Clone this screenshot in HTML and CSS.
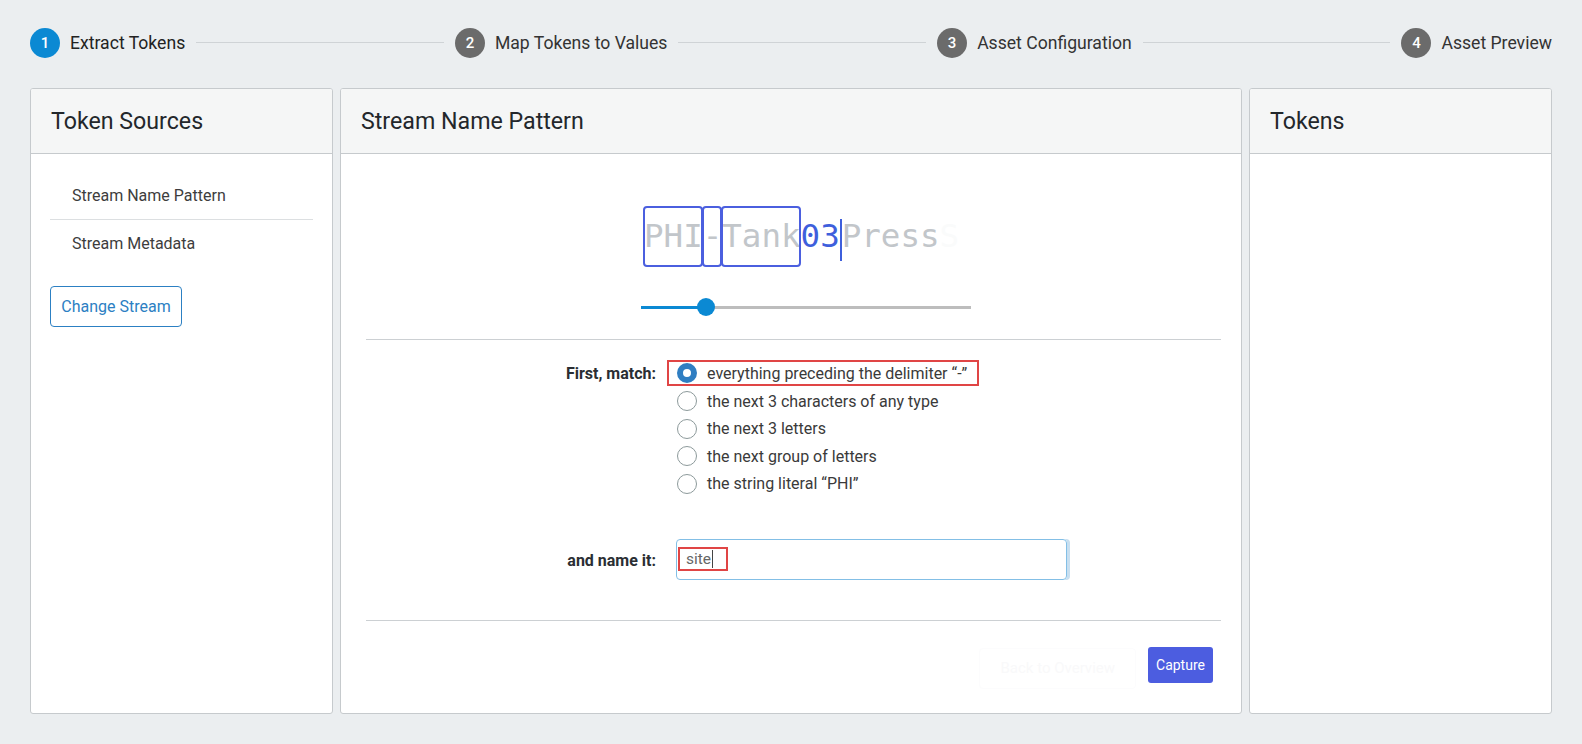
FILE: index.html
```html
<!DOCTYPE html>
<html>
<head>
<meta charset="utf-8">
<link rel="stylesheet" href="styles.css">
</head>
<body>
<div class="page">
  <div class="stepper">
    <div class="step active"><span class="num">1</span><span class="label">Extract Tokens</span></div>
    <div class="line"></div>
    <div class="step"><span class="num">2</span><span class="label">Map Tokens to Values</span></div>
    <div class="line"></div>
    <div class="step"><span class="num">3</span><span class="label">Asset Configuration</span></div>
    <div class="line"></div>
    <div class="step"><span class="num">4</span><span class="label">Asset Preview</span></div>
  </div>

  <div class="panels">
    <section class="panel">
      <div class="panel-head">Token Sources</div>
      <div class="panel-body side">
        <ul class="source-list">
          <li>Stream Name Pattern</li>
          <li>Stream Metadata</li>
        </ul>
        <button class="btn-outline">Change Stream</button>
      </div>
    </section>

    <section class="panel">
      <div class="panel-head">Stream Name Pattern</div>
      <div class="panel-body main">
        <div class="pattern">
          <div class="token-line"><span class="tok boxed">PHI</span><span class="tok boxed">-</span><span class="tok boxed">Tank</span><span class="tok cur">03</span><span class="caret"></span><span class="tok">Press</span><span class="tok ghost">S</span></div>
          <div class="slider"><div class="fill"></div><div class="thumb"></div><div class="rest"></div></div>
        </div>
        <hr class="divider">
        <div class="form-row match-row">
          <div class="form-label">First, match:</div>
          <div class="options">
            <label class="opt selected"><span class="radio on"></span>everything preceding the delimiter “-”</label>
            <label class="opt"><span class="radio"></span>the next 3 characters of any type</label>
            <label class="opt"><span class="radio"></span>the next 3 letters</label>
            <label class="opt"><span class="radio"></span>the next group of letters</label>
            <label class="opt"><span class="radio"></span>the string literal “PHI”</label>
          </div>
        </div>
        <div class="form-row name-row">
          <div class="form-label">and name it:</div>
          <div class="input"><span class="value">site<span class="tcaret"></span></span></div>
        </div>
        <hr class="divider bottom">
        <div class="actions">
          <button class="btn-ghost">Back to Overview</button>
          <button class="btn-primary">Capture</button>
        </div>
      </div>
    </section>

    <section class="panel">
      <div class="panel-head">Tokens</div>
      <div class="panel-body"></div>
    </section>
  </div>
</div>
</body>
</html>
```

FILE: styles.css
```css
* { box-sizing: border-box; }
html, body { margin: 0; padding: 0; }
body {
  background: #ebeef0;
  font-family: Roboto, "Liberation Sans", Arial, sans-serif;
  color: #222;
  width: 1582px;
  height: 744px;
  overflow: hidden;
}
.page { padding: 27px 30px 0 30px; }

.stepper {
  display: flex;
  align-items: center;
  height: 31px;
}
.step { display: flex; align-items: center; }
.num {
  width: 30px; height: 30px; border-radius: 50%;
  background: #6b6b6b; color: #fff;
  display: flex; align-items: center; justify-content: center;
  font-size: 15px; font-weight: 500;
}
.step.active .num { background: #0b89d3; }
.label { margin-left: 10px; font-size: 17.6px; color: #333; }
.step.active .label { color: #222; }
.line { flex: 1; height: 1px; background: #cfd3d6; margin: 0 11px; }

.panels {
  margin-top: 30px;
  display: grid;
  grid-template-columns: 303px 1fr 303px;
  gap: 7px;
  height: 626px;
}
.panel {
  background: #fff;
  border: 1px solid #c6cacd;
  border-radius: 3px;
  display: flex;
  flex-direction: column;
  overflow: hidden;
}
.panel-head {
  height: 65px;
  flex: none;
  background: #f5f6f6;
  border-bottom: 1px solid #c6cacd;
  display: flex; align-items: center;
  padding-left: 20px;
  font-size: 23.2px;
  color: #23272b;
}
.panel-body { flex: 1; }

.side { padding: 18px 19px 0 19px; }
.source-list { list-style: none; margin: 0; padding: 0; }
.source-list li {
  height: 47px;
  display: flex; align-items: center;
  padding-left: 22px;
  font-size: 16px;
  color: #3d3d3d;
}
.source-list li + li { border-top: 1px solid #dcdfe1; }
.btn-outline {
  margin-top: 20px;
  width: 132px; height: 41px;
  background: #fff;
  border: 1px solid #2c80c3;
  border-radius: 4px;
  color: #2c80c3;
  font-family: inherit;
  font-size: 16px;
  padding: 0;
}

.main { padding: 52px 20px 0 25px; }
.pattern { margin-left: 275px; width: 330px; }
.token-line {
  display: flex;
  align-items: center;
  height: 61px;
  font-family: "DejaVu Sans Mono", "Liberation Mono", monospace;
  font-size: 32.5px;
  color: #c2c6ca;
  white-space: nowrap;
  padding-left: 3px;
}
.tok { display: inline-block; line-height: 61px; height: 61px; position: relative; }
.tok.boxed::before {
  content: "";
  position: absolute;
  top: 0; bottom: 0; left: -1px; right: 0;
  border: 2px solid #4b5fdf;
  border-radius: 4px;
}
.tok.cur { color: #3e5fdc; }
.tok.ghost { color: #fafbfb; }
.caret { width: 2px; height: 42px; background: #3e5fdc; margin-top: 6px; }

.slider {
  display: flex;
  align-items: center;
  height: 20px;
  margin-top: 30px;
}
.fill { width: 60px; height: 3px; background: #0b89d3; }
.thumb { width: 18px; height: 18px; border-radius: 50%; background: #0b89d3; margin: 0 -4px; position: relative; }
.rest { flex: 1; height: 3px; background: #bdbdbd; }

.divider { border: 0; border-top: 1px solid #ccd0d3; margin: 22px 0 0 0; }
.divider.bottom { margin-top: 40px; }

.form-row {
  display: grid;
  grid-template-columns: 290px 1fr;
  column-gap: 11px;
}
.match-row { margin-top: 20px; }
.form-label {
  text-align: right;
  font-weight: 700;
  font-size: 16px;
  color: #2a2e33;
  padding-top: 4px;
}
.options { display: flex; flex-direction: column; }
.opt {
  display: inline-flex;
  align-items: center;
  align-self: flex-start;
  height: 27.5px;
  padding: 0 10px 0 8px;
  border: 2px solid transparent;
  font-size: 16px;
  color: #3a3a3a;
}
.opt.selected { border-color: #e04545; height: 26px; margin-bottom: 1.5px; }
.radio {
  width: 20px; height: 20px; border-radius: 50%;
  border: 1px solid #8d9a9b;
  margin-right: 10px;
  flex: none;
  background: #fff;
}
.radio.on {
  border: 6px solid #2f7ec2;
  background: #fff;
}

.name-row { margin-top: 41px; }
.name-row .form-label { padding-top: 12px; }
.input {
  width: 391px; height: 41px;
  border: 1px solid #83bfe6;
  border-radius: 4px;
  box-shadow: 3px 0 0 0 #c8dff0;
  display: flex; align-items: center;
  padding-left: 1px;
  margin-left: 9px;
}
.value {
  display: flex; align-items: center;
  height: 24px;
  border: 2px solid #e04545;
  padding: 0 10px 0 6px;
  width: 50px;
  font-size: 15.5px;
  color: #666;
}
.tcaret { width: 1px; height: 18px; background: #444; margin-left: 1px; }

.actions {
  display: flex;
  justify-content: flex-end;
  gap: 12px;
  margin-top: 26px;
  padding-right: 8px;
}
.btn-ghost {
  height: 41px;
  padding: 0 20px;
  background: #fff;
  border: 1px solid #fcfcfd;
  border-radius: 4px;
  color: #f9f9fa;
  font-family: inherit;
  font-size: 15px;
  margin-top: 1px;
}
.btn-primary {
  height: 36px;
  width: 65px;
  padding: 0;
  background: #4c5de0;
  border: 0;
  border-radius: 3px;
  color: #fff;
  font-family: inherit;
  font-size: 14px;
}
```
